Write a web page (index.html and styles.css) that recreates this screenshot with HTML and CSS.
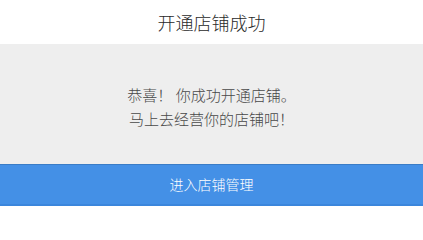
FILE: index.html
```html
<!DOCTYPE html>
<html lang="zh-CN">
<head>
<meta charset="utf-8">
<title>开通店铺成功</title>
<link rel="stylesheet" href="styles.css">
</head>
<body>
<div class="dialog">
  <header class="dialog-header">开通店铺成功</header>
  <main class="dialog-body">
    <p class="msg">恭喜！ 你成功开通店铺。</p>
    <p class="msg">马上去经营你的店铺吧！</p>
  </main>
  <button class="dialog-btn" type="button">进入店铺管理</button>
</div>
</body>
</html>
```
FILE: styles.css
```css
html, body {
  margin: 0;
  padding: 0;
  background: #ffffff;
}
.dialog {
  width: 423px;
  height: 206px;
  display: flex;
  flex-direction: column;
  font-family: "Noto Sans CJK SC", "Noto Sans", sans-serif;
  font-weight: 300;
}
.dialog-header {
  height: 44px;
  line-height: 44px;
  text-align: center;
  font-size: 18px;
  color: #2a2a2a;
  background: #ffffff;
}
.dialog-body {
  height: 120px;
  box-sizing: border-box;
  padding-top: 39px;
  background: #eeeeee;
  text-align: center;
}
.msg {
  margin: 0;
  font-size: 15px;
  line-height: 24px;
  color: #484848;
}
.dialog-btn {
  height: 42px;
  width: 100%;
  margin: 0;
  padding: 0;
  border: none;
  border-top: 1px solid #3a7cc6;
  border-bottom: 2px solid #3b86dc;
  background: #4490e6;
  color: #ffffff;
  font-family: "Noto Sans CJK SC", "Noto Sans", sans-serif;
  font-weight: 300;
  font-size: 14px;
  line-height: 39px;
  text-align: center;
}
```
